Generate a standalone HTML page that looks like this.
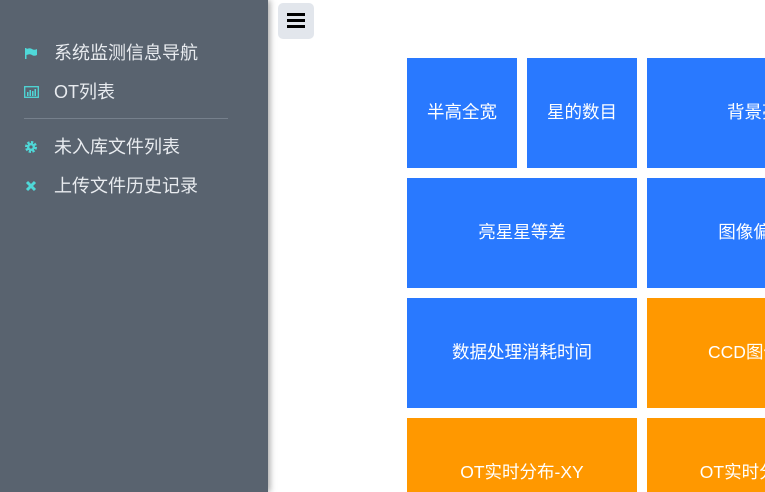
<!DOCTYPE html>
<html><head><meta charset="utf-8"><style>
html,body{margin:0;width:765px;height:492px;overflow:hidden}
body{background:#fff;font-family:"Liberation Sans","Noto Sans CJK SC",sans-serif;position:relative}
.side{position:absolute;left:0;top:0;width:268px;height:492px;background:#59636f;box-shadow:2px 0 6px rgba(0,0,0,.35);z-index:2}
.item{position:absolute;left:24px;color:#e8ebef;font-size:18px;height:20px;line-height:20px}
.item span{position:absolute;left:30px;white-space:nowrap}
.hr{position:absolute;left:24px;top:118px;width:204px;height:1px;background:#76808c}
.btn{position:absolute;left:278px;top:3px;width:36px;height:36px;background:#e2e6ec;border-radius:5px}
.btn i{position:absolute;left:9px;width:18px;height:3px;background:#000}
.wrap{position:absolute;left:0;top:0;width:765px;height:492px;overflow:hidden}
.t{position:absolute;width:110px;height:106px;padding-bottom:4px;color:#fff;font-size:17.5px;display:flex;align-items:center;justify-content:center;white-space:nowrap}
.w{width:230px}.b{background:#2979ff}.o{background:#ff9800}
</style></head><body>
<div class="side">
<div class="item" style="top:43px"><svg width="14" height="14" viewBox="0 0 14 14" style="position:absolute;top:3px"><rect x="1" y="2" width="1.5" height="11" fill="#4fd8d8"/><path d="M2.5 3 Q6 1.5 8 3 T13 3 V9 Q10 10.5 8 9 T2.5 9Z" fill="#4fd8d8"/></svg><span>系统监测信息导航</span></div>
<div class="item" style="top:82px"><svg width="15" height="14" viewBox="0 0 15 14" style="position:absolute;top:3px"><rect x="0.7" y="1.7" width="13.6" height="10.6" fill="none" stroke="#4fd8d8" stroke-width="1.3"/><rect x="3" y="7" width="1.5" height="4" fill="#4fd8d8"/><rect x="5.5" y="5" width="1.5" height="6" fill="#4fd8d8"/><rect x="8" y="6" width="1.5" height="5" fill="#4fd8d8"/><rect x="10.5" y="4" width="1.5" height="7" fill="#4fd8d8"/></svg><span>OT列表</span></div>
<div class="hr"></div>
<div class="item" style="top:137px"><svg width="14" height="14" viewBox="0 0 14 14" style="position:absolute;top:3px"><circle cx="7" cy="7" r="4.5" fill="none" stroke="#4fd8d8" stroke-width="3" stroke-dasharray="2.2 1.3"/><circle cx="7" cy="7" r="4" fill="#4fd8d8"/><circle cx="7" cy="7" r="1.6" fill="#59636f"/></svg><span>未入库文件列表</span></div>
<div class="item" style="top:176px"><svg width="14" height="14" viewBox="0 0 14 14" style="position:absolute;top:3px"><path d="M3 3 L11 11 M11 3 L3 11" stroke="#4fd8d8" stroke-width="3"/></svg><span>上传文件历史记录</span></div>
</div>
<div class="btn"><i style="top:10px"></i><i style="top:16px"></i><i style="top:22px"></i></div>
<div class="wrap">
<div class="t b" style="left:407px;top:58px">半高全宽</div>
<div class="t b" style="left:527px;top:58px">星的数目</div>
<div class="t b w" style="left:647px;top:58px">背景亮度</div>
<div class="t b w" style="left:407px;top:178px">亮星星等差</div>
<div class="t b w" style="left:647px;top:178px">图像偏移量</div>
<div class="t b w" style="left:407px;top:298px">数据处理消耗时间</div>
<div class="t o w" style="left:647px;top:298px">CCD图像温度</div>
<div class="t o w" style="left:407px;top:418px">OT实时分布-XY</div>
<div class="t o w" style="left:647px;top:418px">OT实时分布-RA</div>
</div>
</body></html>
